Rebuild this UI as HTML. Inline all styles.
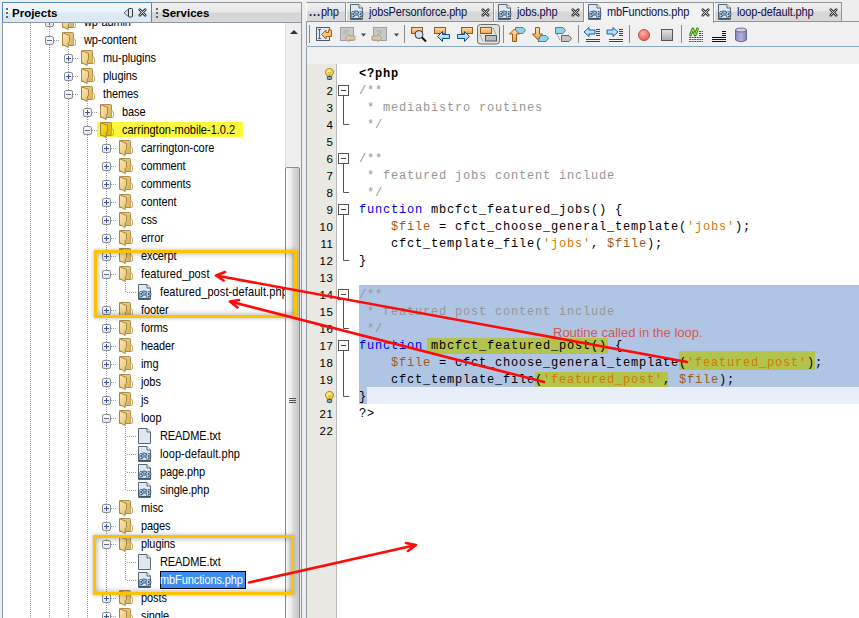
<!DOCTYPE html>
<html><head><meta charset="utf-8">
<style>
html,body{margin:0;padding:0}
body{width:859px;height:618px;overflow:hidden;background:#eeeeee;position:relative;font-family:"Liberation Sans",sans-serif}
.a{position:absolute}
#ptab{left:2px;top:2px;width:148px;height:20px;border:1px solid #4f88c6;border-bottom:none;background:linear-gradient(#f4f9fd 0,#eaf3fa 45%,#dbe9f5 50%,#dde9f5 100%)}
#stab{left:152px;top:2px;width:149px;height:20px;border-top:1px solid #8e949a;border-right:1px solid #8e949a;background:linear-gradient(#f0f0f0 0,#e8e8e8 45%,#d5d5d5 50%,#d8d8d8 100%)}
.htxt{font-size:11.5px;font-weight:bold;color:#000;top:6px;line-height:14px}
.grip{width:2px;height:2px;background:#666}
#hline{left:2px;top:22px;width:300px;height:1px;background:#8e98a3}
#tree{left:2px;top:23px;width:283px;height:595px;border-left:1px solid #8e98a3;background:#fff;overflow:hidden}
#tin{position:absolute;left:-3px;top:-23px;width:286px;height:618px}
#vsb{left:285px;top:23px;width:17px;height:595px;background:#efefef;border-left:1px solid #e2e2e2;border-right:1px solid #8e98a3;box-sizing:border-box}
.tl{position:absolute;font-size:11px;letter-spacing:-0.1px;color:#000;line-height:16px;height:16px;white-space:nowrap;transform:scaleY(1.12);transform-origin:0 75%}
.vd{position:absolute;width:1px;background:repeating-linear-gradient(#9a9a9a 0,#9a9a9a 1px,transparent 1px,transparent 2px)}
.hd{position:absolute;height:1px;background:repeating-linear-gradient(90deg,#9a9a9a 0,#9a9a9a 1px,transparent 1px,transparent 2px)}
.exp{position:absolute;width:7px;height:7px;border:1px solid #8f8f8f;border-radius:2px;background:linear-gradient(#fff,#e6e6e6)}
.exp i{position:absolute;left:1px;top:3px;width:5px;height:1px;background:#3b54a5}
.exp b{position:absolute;left:3px;top:1px;width:1px;height:5px;background:#3b54a5}
.exp.m i{background:#5b6fae}
.etab{position:absolute;top:2px;height:19px;border-top:1px solid #8e949a;border-left:1px solid #fff;border-right:1px solid #8e949a;background:linear-gradient(#efefef 0,#e7e7e7 45%,#d6d6d6 50%,#d9d9d9 100%);box-sizing:border-box;font-size:11px;color:#10104a}
.etab.act{background:#f2f2f2;height:21px}
.etab span{position:absolute;top:3px;line-height:13px;white-space:nowrap;letter-spacing:-0.15px;transform:scaleY(1.1);transform-origin:0 80%}
#tbar{left:306px;top:21px;width:553px;height:25px;border-top:1px solid #8e949a;border-left:1px solid #8e98a3;background:#f0f0f0;box-sizing:border-box}
#tbline{left:307px;top:46px;width:552px;height:1px;background:#8aa6c1}
#band{left:306px;top:47px;width:553px;height:17px;background:#f0f0f0;border-left:1px solid #8e98a3;box-sizing:border-box}
#gut{left:306px;top:64px;width:31px;height:554px;background:#e9e8e2;border-left:1px solid #8e98a3;border-right:1px solid #b9b9b4;box-sizing:border-box}
#code{left:337px;top:64px;width:522px;height:554px;background:#fff}
.ln{position:absolute;left:307px;width:26.6px;text-align:right;font-size:11.5px;letter-spacing:0.6px;color:#000;height:17px;line-height:17px}
.cl{position:absolute;left:359px;font-family:"Liberation Mono",monospace;font-size:12px;letter-spacing:0.8px;height:17px;line-height:17px;white-space:pre;color:#000}
.cm{color:#969696}
.kw{color:#0000e6}
.vr{color:#9b5b1a}
.st{color:#ce7b00}
.hl{background:#b3c34c}
.tsep{position:absolute;top:25px;width:1px;height:18px;background:#8a8a8a}
.ybox{position:absolute;border:3px solid #fcc400;box-shadow:inset 0 0 6px rgba(0,0,0,.38),0 0 4px rgba(0,0,0,.3)}
</style></head><body>
<svg width="0" height="0" style="position:absolute"><defs>
<linearGradient id="fb" x1="0" y1="0" x2="1" y2="1"><stop offset="0" stop-color="#efd48a"/><stop offset="1" stop-color="#d6b262"/></linearGradient>
<linearGradient id="ff" x1="0" y1="0" x2="0.6" y2="1"><stop offset="0" stop-color="#fae8b0"/><stop offset="1" stop-color="#e9ca7c"/></linearGradient>
<linearGradient id="fby" x1="0" y1="0" x2="1" y2="1"><stop offset="0" stop-color="#ecd21e"/><stop offset="1" stop-color="#d8b60a"/></linearGradient>
<linearGradient id="ffy" x1="0" y1="0" x2="0.6" y2="1"><stop offset="0" stop-color="#f8e62a"/><stop offset="1" stop-color="#e2c410"/></linearGradient>
</defs></svg>
<div class="a" id="ptab"></div>
<div class="a" id="stab"></div>
<div class="a grip" style="left:6px;top:8px"></div><div class="a grip" style="left:6px;top:12px"></div><div class="a grip" style="left:6px;top:16px"></div>
<div class="a htxt" style="left:12px">Projects</div>
<svg class="a" style="left:123px;top:8px" width="11" height="10" viewBox="0 0 11 10"><path d="M5.5 1 L1 4.8 L5.5 8.6 Z" fill="#d8dde2" stroke="#666"/><rect x="5.5" y="0.5" width="4" height="8.5" rx="0.8" fill="#e4e8ec" stroke="#333"/></svg><svg class="a" style="left:138px;top:8px" width="9" height="9" viewBox="0 0 9 9"><path d="M1.8 1.8 L7.2 7.2 M7.2 1.8 L1.8 7.2" stroke="#3a3a3a" stroke-width="2.7" stroke-linecap="round"/><path d="M1.8 1.8 L7.2 7.2 M7.2 1.8 L1.8 7.2" stroke="#eef5fa" stroke-width="0.9" stroke-linecap="round"/></svg>
<div class="a grip" style="left:156px;top:8px"></div><div class="a grip" style="left:156px;top:12px"></div><div class="a grip" style="left:156px;top:16px"></div>
<div class="a htxt" style="left:162px">Services</div>
<div class="a" id="hline"></div>
<div class="a" id="tree"><div id="tin"><div class="vd" style="left:30px;top:23px;height:595px"></div>
<div class="vd" style="left:49px;top:23px;height:595px"></div>
<div class="vd" style="left:68px;top:49px;height:569px"></div>
<div class="vd" style="left:87px;top:103px;height:515px"></div>
<div class="vd" style="left:106px;top:139px;height:479px"></div>
<div class="vd" style="left:125px;top:283px;height:9px"></div>
<div class="vd" style="left:125px;top:427px;height:63px"></div>
<div class="vd" style="left:125px;top:553px;height:27px"></div>
<div class="a" style="left:97px;top:122px;width:146px;height:15px;background:#fbf83c"></div>
<div class="hd" style="left:54px;top:22px;width:6px"></div>
<div class="exp " style="left:45px;top:18px"><i></i><b></b></div>
<svg width="14" height="16" viewBox="0 0 14 16" style="position:absolute;left:62px;top:14px">
<path d="M0.5 1.5 Q0.5 0.5 1.5 0.5 H10.5 Q11.5 0.5 11.5 1.5 V13.5 H0.5 Z" fill="url(#fb)" stroke="#b08c48"/>
<path d="M11.5 6.2 Q13.6 7.2 13.6 9.5 V12 Q13.6 13.5 12 13.5 H11.5 Z" fill="#fff" stroke="#c4a25a"/>
<path d="M0.5 0.8 L7.5 3.4 V9.4 L6.2 11 V15.5 L0.5 12.6 Z" fill="url(#ff)" stroke="#a98540"/>
</svg>
<div class="tl" style="left:84px;top:14px;">wp-admin</div>
<div class="hd" style="left:54px;top:40px;width:6px"></div>
<div class="exp m" style="left:45px;top:36px"><i></i></div>
<svg width="14" height="16" viewBox="0 0 14 16" style="position:absolute;left:62px;top:32px">
<path d="M0.5 1.5 Q0.5 0.5 1.5 0.5 H10.5 Q11.5 0.5 11.5 1.5 V13.5 H0.5 Z" fill="url(#fb)" stroke="#b08c48"/>
<path d="M11.5 6.2 Q13.6 7.2 13.6 9.5 V12 Q13.6 13.5 12 13.5 H11.5 Z" fill="#fff" stroke="#c4a25a"/>
<path d="M0.5 0.8 L7.5 3.4 V9.4 L6.2 11 V15.5 L0.5 12.6 Z" fill="url(#ff)" stroke="#a98540"/>
</svg>
<div class="tl" style="left:84px;top:32px;">wp-content</div>
<div class="hd" style="left:73px;top:58px;width:6px"></div>
<div class="exp " style="left:64px;top:54px"><i></i><b></b></div>
<svg width="14" height="16" viewBox="0 0 14 16" style="position:absolute;left:81px;top:50px">
<path d="M0.5 1.5 Q0.5 0.5 1.5 0.5 H10.5 Q11.5 0.5 11.5 1.5 V13.5 H0.5 Z" fill="url(#fb)" stroke="#b08c48"/>
<path d="M11.5 6.2 Q13.6 7.2 13.6 9.5 V12 Q13.6 13.5 12 13.5 H11.5 Z" fill="#fff" stroke="#c4a25a"/>
<path d="M0.5 0.8 L7.5 3.4 V9.4 L6.2 11 V15.5 L0.5 12.6 Z" fill="url(#ff)" stroke="#a98540"/>
</svg>
<div class="tl" style="left:103px;top:50px;">mu-plugins</div>
<div class="hd" style="left:73px;top:76px;width:6px"></div>
<div class="exp " style="left:64px;top:72px"><i></i><b></b></div>
<svg width="14" height="16" viewBox="0 0 14 16" style="position:absolute;left:81px;top:68px">
<path d="M0.5 1.5 Q0.5 0.5 1.5 0.5 H10.5 Q11.5 0.5 11.5 1.5 V13.5 H0.5 Z" fill="url(#fb)" stroke="#b08c48"/>
<path d="M11.5 6.2 Q13.6 7.2 13.6 9.5 V12 Q13.6 13.5 12 13.5 H11.5 Z" fill="#fff" stroke="#c4a25a"/>
<path d="M0.5 0.8 L7.5 3.4 V9.4 L6.2 11 V15.5 L0.5 12.6 Z" fill="url(#ff)" stroke="#a98540"/>
</svg>
<div class="tl" style="left:103px;top:68px;">plugins</div>
<div class="hd" style="left:73px;top:94px;width:6px"></div>
<div class="exp m" style="left:64px;top:90px"><i></i></div>
<svg width="14" height="16" viewBox="0 0 14 16" style="position:absolute;left:81px;top:86px">
<path d="M0.5 1.5 Q0.5 0.5 1.5 0.5 H10.5 Q11.5 0.5 11.5 1.5 V13.5 H0.5 Z" fill="url(#fb)" stroke="#b08c48"/>
<path d="M11.5 6.2 Q13.6 7.2 13.6 9.5 V12 Q13.6 13.5 12 13.5 H11.5 Z" fill="#fff" stroke="#c4a25a"/>
<path d="M0.5 0.8 L7.5 3.4 V9.4 L6.2 11 V15.5 L0.5 12.6 Z" fill="url(#ff)" stroke="#a98540"/>
</svg>
<div class="tl" style="left:103px;top:86px;">themes</div>
<div class="hd" style="left:92px;top:112px;width:6px"></div>
<div class="exp " style="left:83px;top:108px"><i></i><b></b></div>
<svg width="14" height="16" viewBox="0 0 14 16" style="position:absolute;left:100px;top:104px">
<path d="M0.5 1.5 Q0.5 0.5 1.5 0.5 H10.5 Q11.5 0.5 11.5 1.5 V13.5 H0.5 Z" fill="url(#fb)" stroke="#b08c48"/>
<path d="M11.5 6.2 Q13.6 7.2 13.6 9.5 V12 Q13.6 13.5 12 13.5 H11.5 Z" fill="#fff" stroke="#c4a25a"/>
<path d="M0.5 0.8 L7.5 3.4 V9.4 L6.2 11 V15.5 L0.5 12.6 Z" fill="url(#ff)" stroke="#a98540"/>
</svg>
<div class="tl" style="left:122px;top:104px;">base</div>
<div class="hd" style="left:92px;top:130px;width:6px"></div>
<div class="exp m" style="left:83px;top:126px"><i></i></div>
<svg width="14" height="16" viewBox="0 0 14 16" style="position:absolute;left:100px;top:122px">
<path d="M0.5 1.5 Q0.5 0.5 1.5 0.5 H10.5 Q11.5 0.5 11.5 1.5 V13.5 H0.5 Z" fill="url(#fby)" stroke="#b08c48"/>
<path d="M11.5 6.2 Q13.6 7.2 13.6 9.5 V12 Q13.6 13.5 12 13.5 H11.5 Z" fill="#fbf83c" stroke="#c4a25a"/>
<path d="M0.5 0.8 L7.5 3.4 V9.4 L6.2 11 V15.5 L0.5 12.6 Z" fill="url(#ffy)" stroke="#a98540"/>
</svg>
<div class="tl" style="left:122px;top:122px;letter-spacing:0.0px;">carrington-mobile-1.0.2</div>
<div class="hd" style="left:111px;top:148px;width:6px"></div>
<div class="exp " style="left:102px;top:144px"><i></i><b></b></div>
<svg width="14" height="16" viewBox="0 0 14 16" style="position:absolute;left:119px;top:140px">
<path d="M0.5 1.5 Q0.5 0.5 1.5 0.5 H10.5 Q11.5 0.5 11.5 1.5 V13.5 H0.5 Z" fill="url(#fb)" stroke="#b08c48"/>
<path d="M11.5 6.2 Q13.6 7.2 13.6 9.5 V12 Q13.6 13.5 12 13.5 H11.5 Z" fill="#fff" stroke="#c4a25a"/>
<path d="M0.5 0.8 L7.5 3.4 V9.4 L6.2 11 V15.5 L0.5 12.6 Z" fill="url(#ff)" stroke="#a98540"/>
</svg>
<div class="tl" style="left:141px;top:140px;letter-spacing:-0.04px;">carrington-core</div>
<div class="hd" style="left:111px;top:166px;width:6px"></div>
<div class="exp " style="left:102px;top:162px"><i></i><b></b></div>
<svg width="14" height="16" viewBox="0 0 14 16" style="position:absolute;left:119px;top:158px">
<path d="M0.5 1.5 Q0.5 0.5 1.5 0.5 H10.5 Q11.5 0.5 11.5 1.5 V13.5 H0.5 Z" fill="url(#fb)" stroke="#b08c48"/>
<path d="M11.5 6.2 Q13.6 7.2 13.6 9.5 V12 Q13.6 13.5 12 13.5 H11.5 Z" fill="#fff" stroke="#c4a25a"/>
<path d="M0.5 0.8 L7.5 3.4 V9.4 L6.2 11 V15.5 L0.5 12.6 Z" fill="url(#ff)" stroke="#a98540"/>
</svg>
<div class="tl" style="left:141px;top:158px;">comment</div>
<div class="hd" style="left:111px;top:184px;width:6px"></div>
<div class="exp " style="left:102px;top:180px"><i></i><b></b></div>
<svg width="14" height="16" viewBox="0 0 14 16" style="position:absolute;left:119px;top:176px">
<path d="M0.5 1.5 Q0.5 0.5 1.5 0.5 H10.5 Q11.5 0.5 11.5 1.5 V13.5 H0.5 Z" fill="url(#fb)" stroke="#b08c48"/>
<path d="M11.5 6.2 Q13.6 7.2 13.6 9.5 V12 Q13.6 13.5 12 13.5 H11.5 Z" fill="#fff" stroke="#c4a25a"/>
<path d="M0.5 0.8 L7.5 3.4 V9.4 L6.2 11 V15.5 L0.5 12.6 Z" fill="url(#ff)" stroke="#a98540"/>
</svg>
<div class="tl" style="left:141px;top:176px;">comments</div>
<div class="hd" style="left:111px;top:202px;width:6px"></div>
<div class="exp " style="left:102px;top:198px"><i></i><b></b></div>
<svg width="14" height="16" viewBox="0 0 14 16" style="position:absolute;left:119px;top:194px">
<path d="M0.5 1.5 Q0.5 0.5 1.5 0.5 H10.5 Q11.5 0.5 11.5 1.5 V13.5 H0.5 Z" fill="url(#fb)" stroke="#b08c48"/>
<path d="M11.5 6.2 Q13.6 7.2 13.6 9.5 V12 Q13.6 13.5 12 13.5 H11.5 Z" fill="#fff" stroke="#c4a25a"/>
<path d="M0.5 0.8 L7.5 3.4 V9.4 L6.2 11 V15.5 L0.5 12.6 Z" fill="url(#ff)" stroke="#a98540"/>
</svg>
<div class="tl" style="left:141px;top:194px;">content</div>
<div class="hd" style="left:111px;top:220px;width:6px"></div>
<div class="exp " style="left:102px;top:216px"><i></i><b></b></div>
<svg width="14" height="16" viewBox="0 0 14 16" style="position:absolute;left:119px;top:212px">
<path d="M0.5 1.5 Q0.5 0.5 1.5 0.5 H10.5 Q11.5 0.5 11.5 1.5 V13.5 H0.5 Z" fill="url(#fb)" stroke="#b08c48"/>
<path d="M11.5 6.2 Q13.6 7.2 13.6 9.5 V12 Q13.6 13.5 12 13.5 H11.5 Z" fill="#fff" stroke="#c4a25a"/>
<path d="M0.5 0.8 L7.5 3.4 V9.4 L6.2 11 V15.5 L0.5 12.6 Z" fill="url(#ff)" stroke="#a98540"/>
</svg>
<div class="tl" style="left:141px;top:212px;">css</div>
<div class="hd" style="left:111px;top:238px;width:6px"></div>
<div class="exp " style="left:102px;top:234px"><i></i><b></b></div>
<svg width="14" height="16" viewBox="0 0 14 16" style="position:absolute;left:119px;top:230px">
<path d="M0.5 1.5 Q0.5 0.5 1.5 0.5 H10.5 Q11.5 0.5 11.5 1.5 V13.5 H0.5 Z" fill="url(#fb)" stroke="#b08c48"/>
<path d="M11.5 6.2 Q13.6 7.2 13.6 9.5 V12 Q13.6 13.5 12 13.5 H11.5 Z" fill="#fff" stroke="#c4a25a"/>
<path d="M0.5 0.8 L7.5 3.4 V9.4 L6.2 11 V15.5 L0.5 12.6 Z" fill="url(#ff)" stroke="#a98540"/>
</svg>
<div class="tl" style="left:141px;top:230px;">error</div>
<div class="hd" style="left:111px;top:256px;width:6px"></div>
<div class="exp " style="left:102px;top:252px"><i></i><b></b></div>
<svg width="14" height="16" viewBox="0 0 14 16" style="position:absolute;left:119px;top:248px">
<path d="M0.5 1.5 Q0.5 0.5 1.5 0.5 H10.5 Q11.5 0.5 11.5 1.5 V13.5 H0.5 Z" fill="url(#fb)" stroke="#b08c48"/>
<path d="M11.5 6.2 Q13.6 7.2 13.6 9.5 V12 Q13.6 13.5 12 13.5 H11.5 Z" fill="#fff" stroke="#c4a25a"/>
<path d="M0.5 0.8 L7.5 3.4 V9.4 L6.2 11 V15.5 L0.5 12.6 Z" fill="url(#ff)" stroke="#a98540"/>
</svg>
<div class="tl" style="left:141px;top:248px;">excerpt</div>
<div class="hd" style="left:111px;top:274px;width:6px"></div>
<div class="exp m" style="left:102px;top:270px"><i></i></div>
<svg width="14" height="16" viewBox="0 0 14 16" style="position:absolute;left:119px;top:266px">
<path d="M0.5 1.5 Q0.5 0.5 1.5 0.5 H10.5 Q11.5 0.5 11.5 1.5 V13.5 H0.5 Z" fill="url(#fb)" stroke="#b08c48"/>
<path d="M11.5 6.2 Q13.6 7.2 13.6 9.5 V12 Q13.6 13.5 12 13.5 H11.5 Z" fill="#fff" stroke="#c4a25a"/>
<path d="M0.5 0.8 L7.5 3.4 V9.4 L6.2 11 V15.5 L0.5 12.6 Z" fill="url(#ff)" stroke="#a98540"/>
</svg>
<div class="tl" style="left:141px;top:266px;letter-spacing:0.1px;">featured_post</div>
<div class="hd" style="left:127px;top:292px;width:10px"></div>
<svg width="14" height="16" viewBox="0 0 14 16" style="position:absolute;left:138px;top:284px"><path d="M0.5 0.5 H9 L12.5 4 V15.5 H0.5 Z" fill="#dfe8f1" stroke="#5b6975"/><path d="M9 0.5 V4 H12.5" fill="#eef3f8" stroke="#5b6975"/><path d="M2 13.5V8.2M2 8.5H3.3Q4.4 8.5 4.4 9.8V10.2Q4.4 11.6 3.3 11.6H2M6 6.5V11.8M6 9Q6.4 8.4 7.1 8.4Q8.1 8.4 8.1 9.4V11.8M9.6 13.5V8.2M9.6 8.5H10.9Q12 8.5 12 9.8V10.2Q12 11.6 10.9 11.6H9.6" fill="none" stroke="#2f4b6b" stroke-width="2.6"/><path d="M2 13.5V8.2M2 8.5H3.3Q4.4 8.5 4.4 9.8V10.2Q4.4 11.6 3.3 11.6H2M6 6.5V11.8M6 9Q6.4 8.4 7.1 8.4Q8.1 8.4 8.1 9.4V11.8M9.6 13.5V8.2M9.6 8.5H10.9Q12 8.5 12 9.8V10.2Q12 11.6 10.9 11.6H9.6" fill="none" stroke="#b9dcf8" stroke-width="1"/><path d="M1 14.5H12" stroke="#3d546e" stroke-width="1.2"/></svg>
<div class="tl" style="left:160px;top:284px;letter-spacing:0.1px;">featured_post-default.php</div>
<div class="hd" style="left:111px;top:310px;width:6px"></div>
<div class="exp " style="left:102px;top:306px"><i></i><b></b></div>
<svg width="14" height="16" viewBox="0 0 14 16" style="position:absolute;left:119px;top:302px">
<path d="M0.5 1.5 Q0.5 0.5 1.5 0.5 H10.5 Q11.5 0.5 11.5 1.5 V13.5 H0.5 Z" fill="url(#fb)" stroke="#b08c48"/>
<path d="M11.5 6.2 Q13.6 7.2 13.6 9.5 V12 Q13.6 13.5 12 13.5 H11.5 Z" fill="#fff" stroke="#c4a25a"/>
<path d="M0.5 0.8 L7.5 3.4 V9.4 L6.2 11 V15.5 L0.5 12.6 Z" fill="url(#ff)" stroke="#a98540"/>
</svg>
<div class="tl" style="left:141px;top:302px;">footer</div>
<div class="hd" style="left:111px;top:328px;width:6px"></div>
<div class="exp " style="left:102px;top:324px"><i></i><b></b></div>
<svg width="14" height="16" viewBox="0 0 14 16" style="position:absolute;left:119px;top:320px">
<path d="M0.5 1.5 Q0.5 0.5 1.5 0.5 H10.5 Q11.5 0.5 11.5 1.5 V13.5 H0.5 Z" fill="url(#fb)" stroke="#b08c48"/>
<path d="M11.5 6.2 Q13.6 7.2 13.6 9.5 V12 Q13.6 13.5 12 13.5 H11.5 Z" fill="#fff" stroke="#c4a25a"/>
<path d="M0.5 0.8 L7.5 3.4 V9.4 L6.2 11 V15.5 L0.5 12.6 Z" fill="url(#ff)" stroke="#a98540"/>
</svg>
<div class="tl" style="left:141px;top:320px;">forms</div>
<div class="hd" style="left:111px;top:346px;width:6px"></div>
<div class="exp " style="left:102px;top:342px"><i></i><b></b></div>
<svg width="14" height="16" viewBox="0 0 14 16" style="position:absolute;left:119px;top:338px">
<path d="M0.5 1.5 Q0.5 0.5 1.5 0.5 H10.5 Q11.5 0.5 11.5 1.5 V13.5 H0.5 Z" fill="url(#fb)" stroke="#b08c48"/>
<path d="M11.5 6.2 Q13.6 7.2 13.6 9.5 V12 Q13.6 13.5 12 13.5 H11.5 Z" fill="#fff" stroke="#c4a25a"/>
<path d="M0.5 0.8 L7.5 3.4 V9.4 L6.2 11 V15.5 L0.5 12.6 Z" fill="url(#ff)" stroke="#a98540"/>
</svg>
<div class="tl" style="left:141px;top:338px;">header</div>
<div class="hd" style="left:111px;top:364px;width:6px"></div>
<div class="exp " style="left:102px;top:360px"><i></i><b></b></div>
<svg width="14" height="16" viewBox="0 0 14 16" style="position:absolute;left:119px;top:356px">
<path d="M0.5 1.5 Q0.5 0.5 1.5 0.5 H10.5 Q11.5 0.5 11.5 1.5 V13.5 H0.5 Z" fill="url(#fb)" stroke="#b08c48"/>
<path d="M11.5 6.2 Q13.6 7.2 13.6 9.5 V12 Q13.6 13.5 12 13.5 H11.5 Z" fill="#fff" stroke="#c4a25a"/>
<path d="M0.5 0.8 L7.5 3.4 V9.4 L6.2 11 V15.5 L0.5 12.6 Z" fill="url(#ff)" stroke="#a98540"/>
</svg>
<div class="tl" style="left:141px;top:356px;">img</div>
<div class="hd" style="left:111px;top:382px;width:6px"></div>
<div class="exp " style="left:102px;top:378px"><i></i><b></b></div>
<svg width="14" height="16" viewBox="0 0 14 16" style="position:absolute;left:119px;top:374px">
<path d="M0.5 1.5 Q0.5 0.5 1.5 0.5 H10.5 Q11.5 0.5 11.5 1.5 V13.5 H0.5 Z" fill="url(#fb)" stroke="#b08c48"/>
<path d="M11.5 6.2 Q13.6 7.2 13.6 9.5 V12 Q13.6 13.5 12 13.5 H11.5 Z" fill="#fff" stroke="#c4a25a"/>
<path d="M0.5 0.8 L7.5 3.4 V9.4 L6.2 11 V15.5 L0.5 12.6 Z" fill="url(#ff)" stroke="#a98540"/>
</svg>
<div class="tl" style="left:141px;top:374px;">jobs</div>
<div class="hd" style="left:111px;top:400px;width:6px"></div>
<div class="exp " style="left:102px;top:396px"><i></i><b></b></div>
<svg width="14" height="16" viewBox="0 0 14 16" style="position:absolute;left:119px;top:392px">
<path d="M0.5 1.5 Q0.5 0.5 1.5 0.5 H10.5 Q11.5 0.5 11.5 1.5 V13.5 H0.5 Z" fill="url(#fb)" stroke="#b08c48"/>
<path d="M11.5 6.2 Q13.6 7.2 13.6 9.5 V12 Q13.6 13.5 12 13.5 H11.5 Z" fill="#fff" stroke="#c4a25a"/>
<path d="M0.5 0.8 L7.5 3.4 V9.4 L6.2 11 V15.5 L0.5 12.6 Z" fill="url(#ff)" stroke="#a98540"/>
</svg>
<div class="tl" style="left:141px;top:392px;">js</div>
<div class="hd" style="left:111px;top:418px;width:6px"></div>
<div class="exp m" style="left:102px;top:414px"><i></i></div>
<svg width="14" height="16" viewBox="0 0 14 16" style="position:absolute;left:119px;top:410px">
<path d="M0.5 1.5 Q0.5 0.5 1.5 0.5 H10.5 Q11.5 0.5 11.5 1.5 V13.5 H0.5 Z" fill="url(#fb)" stroke="#b08c48"/>
<path d="M11.5 6.2 Q13.6 7.2 13.6 9.5 V12 Q13.6 13.5 12 13.5 H11.5 Z" fill="#fff" stroke="#c4a25a"/>
<path d="M0.5 0.8 L7.5 3.4 V9.4 L6.2 11 V15.5 L0.5 12.6 Z" fill="url(#ff)" stroke="#a98540"/>
</svg>
<div class="tl" style="left:141px;top:410px;">loop</div>
<div class="hd" style="left:127px;top:436px;width:10px"></div>
<svg width="14" height="16" viewBox="0 0 14 16" style="position:absolute;left:138px;top:428px"><path d="M0.5 0.5 H9 L12.5 4 V15.5 H0.5 Z" fill="#dfe8f1" stroke="#5b6975"/><path d="M9 0.5 V4 H12.5" fill="#eef3f8" stroke="#5b6975"/></svg>
<div class="tl" style="left:160px;top:428px;">README.txt</div>
<div class="hd" style="left:127px;top:454px;width:10px"></div>
<svg width="14" height="16" viewBox="0 0 14 16" style="position:absolute;left:138px;top:446px"><path d="M0.5 0.5 H9 L12.5 4 V15.5 H0.5 Z" fill="#dfe8f1" stroke="#5b6975"/><path d="M9 0.5 V4 H12.5" fill="#eef3f8" stroke="#5b6975"/><path d="M2 13.5V8.2M2 8.5H3.3Q4.4 8.5 4.4 9.8V10.2Q4.4 11.6 3.3 11.6H2M6 6.5V11.8M6 9Q6.4 8.4 7.1 8.4Q8.1 8.4 8.1 9.4V11.8M9.6 13.5V8.2M9.6 8.5H10.9Q12 8.5 12 9.8V10.2Q12 11.6 10.9 11.6H9.6" fill="none" stroke="#2f4b6b" stroke-width="2.6"/><path d="M2 13.5V8.2M2 8.5H3.3Q4.4 8.5 4.4 9.8V10.2Q4.4 11.6 3.3 11.6H2M6 6.5V11.8M6 9Q6.4 8.4 7.1 8.4Q8.1 8.4 8.1 9.4V11.8M9.6 13.5V8.2M9.6 8.5H10.9Q12 8.5 12 9.8V10.2Q12 11.6 10.9 11.6H9.6" fill="none" stroke="#b9dcf8" stroke-width="1"/><path d="M1 14.5H12" stroke="#3d546e" stroke-width="1.2"/></svg>
<div class="tl" style="left:160px;top:446px;letter-spacing:0.07px;">loop-default.php</div>
<div class="hd" style="left:127px;top:472px;width:10px"></div>
<svg width="14" height="16" viewBox="0 0 14 16" style="position:absolute;left:138px;top:464px"><path d="M0.5 0.5 H9 L12.5 4 V15.5 H0.5 Z" fill="#dfe8f1" stroke="#5b6975"/><path d="M9 0.5 V4 H12.5" fill="#eef3f8" stroke="#5b6975"/><path d="M2 13.5V8.2M2 8.5H3.3Q4.4 8.5 4.4 9.8V10.2Q4.4 11.6 3.3 11.6H2M6 6.5V11.8M6 9Q6.4 8.4 7.1 8.4Q8.1 8.4 8.1 9.4V11.8M9.6 13.5V8.2M9.6 8.5H10.9Q12 8.5 12 9.8V10.2Q12 11.6 10.9 11.6H9.6" fill="none" stroke="#2f4b6b" stroke-width="2.6"/><path d="M2 13.5V8.2M2 8.5H3.3Q4.4 8.5 4.4 9.8V10.2Q4.4 11.6 3.3 11.6H2M6 6.5V11.8M6 9Q6.4 8.4 7.1 8.4Q8.1 8.4 8.1 9.4V11.8M9.6 13.5V8.2M9.6 8.5H10.9Q12 8.5 12 9.8V10.2Q12 11.6 10.9 11.6H9.6" fill="none" stroke="#b9dcf8" stroke-width="1"/><path d="M1 14.5H12" stroke="#3d546e" stroke-width="1.2"/></svg>
<div class="tl" style="left:160px;top:464px;">page.php</div>
<div class="hd" style="left:127px;top:490px;width:10px"></div>
<svg width="14" height="16" viewBox="0 0 14 16" style="position:absolute;left:138px;top:482px"><path d="M0.5 0.5 H9 L12.5 4 V15.5 H0.5 Z" fill="#dfe8f1" stroke="#5b6975"/><path d="M9 0.5 V4 H12.5" fill="#eef3f8" stroke="#5b6975"/><path d="M2 13.5V8.2M2 8.5H3.3Q4.4 8.5 4.4 9.8V10.2Q4.4 11.6 3.3 11.6H2M6 6.5V11.8M6 9Q6.4 8.4 7.1 8.4Q8.1 8.4 8.1 9.4V11.8M9.6 13.5V8.2M9.6 8.5H10.9Q12 8.5 12 9.8V10.2Q12 11.6 10.9 11.6H9.6" fill="none" stroke="#2f4b6b" stroke-width="2.6"/><path d="M2 13.5V8.2M2 8.5H3.3Q4.4 8.5 4.4 9.8V10.2Q4.4 11.6 3.3 11.6H2M6 6.5V11.8M6 9Q6.4 8.4 7.1 8.4Q8.1 8.4 8.1 9.4V11.8M9.6 13.5V8.2M9.6 8.5H10.9Q12 8.5 12 9.8V10.2Q12 11.6 10.9 11.6H9.6" fill="none" stroke="#b9dcf8" stroke-width="1"/><path d="M1 14.5H12" stroke="#3d546e" stroke-width="1.2"/></svg>
<div class="tl" style="left:160px;top:482px;">single.php</div>
<div class="hd" style="left:111px;top:508px;width:6px"></div>
<div class="exp " style="left:102px;top:504px"><i></i><b></b></div>
<svg width="14" height="16" viewBox="0 0 14 16" style="position:absolute;left:119px;top:500px">
<path d="M0.5 1.5 Q0.5 0.5 1.5 0.5 H10.5 Q11.5 0.5 11.5 1.5 V13.5 H0.5 Z" fill="url(#fb)" stroke="#b08c48"/>
<path d="M11.5 6.2 Q13.6 7.2 13.6 9.5 V12 Q13.6 13.5 12 13.5 H11.5 Z" fill="#fff" stroke="#c4a25a"/>
<path d="M0.5 0.8 L7.5 3.4 V9.4 L6.2 11 V15.5 L0.5 12.6 Z" fill="url(#ff)" stroke="#a98540"/>
</svg>
<div class="tl" style="left:141px;top:500px;">misc</div>
<div class="hd" style="left:111px;top:526px;width:6px"></div>
<div class="exp " style="left:102px;top:522px"><i></i><b></b></div>
<svg width="14" height="16" viewBox="0 0 14 16" style="position:absolute;left:119px;top:518px">
<path d="M0.5 1.5 Q0.5 0.5 1.5 0.5 H10.5 Q11.5 0.5 11.5 1.5 V13.5 H0.5 Z" fill="url(#fb)" stroke="#b08c48"/>
<path d="M11.5 6.2 Q13.6 7.2 13.6 9.5 V12 Q13.6 13.5 12 13.5 H11.5 Z" fill="#fff" stroke="#c4a25a"/>
<path d="M0.5 0.8 L7.5 3.4 V9.4 L6.2 11 V15.5 L0.5 12.6 Z" fill="url(#ff)" stroke="#a98540"/>
</svg>
<div class="tl" style="left:141px;top:518px;">pages</div>
<div class="hd" style="left:111px;top:544px;width:6px"></div>
<div class="exp m" style="left:102px;top:540px"><i></i></div>
<svg width="14" height="16" viewBox="0 0 14 16" style="position:absolute;left:119px;top:536px">
<path d="M0.5 1.5 Q0.5 0.5 1.5 0.5 H10.5 Q11.5 0.5 11.5 1.5 V13.5 H0.5 Z" fill="url(#fb)" stroke="#b08c48"/>
<path d="M11.5 6.2 Q13.6 7.2 13.6 9.5 V12 Q13.6 13.5 12 13.5 H11.5 Z" fill="#fff" stroke="#c4a25a"/>
<path d="M0.5 0.8 L7.5 3.4 V9.4 L6.2 11 V15.5 L0.5 12.6 Z" fill="url(#ff)" stroke="#a98540"/>
</svg>
<div class="tl" style="left:141px;top:536px;">plugins</div>
<div class="hd" style="left:127px;top:562px;width:10px"></div>
<svg width="14" height="16" viewBox="0 0 14 16" style="position:absolute;left:138px;top:554px"><path d="M0.5 0.5 H9 L12.5 4 V15.5 H0.5 Z" fill="#dfe8f1" stroke="#5b6975"/><path d="M9 0.5 V4 H12.5" fill="#eef3f8" stroke="#5b6975"/></svg>
<div class="tl" style="left:160px;top:554px;">README.txt</div>
<div class="hd" style="left:127px;top:580px;width:10px"></div>
<svg width="14" height="16" viewBox="0 0 14 16" style="position:absolute;left:138px;top:572px"><path d="M0.5 0.5 H9 L12.5 4 V15.5 H0.5 Z" fill="#dfe8f1" stroke="#5b6975"/><path d="M9 0.5 V4 H12.5" fill="#eef3f8" stroke="#5b6975"/><path d="M2 13.5V8.2M2 8.5H3.3Q4.4 8.5 4.4 9.8V10.2Q4.4 11.6 3.3 11.6H2M6 6.5V11.8M6 9Q6.4 8.4 7.1 8.4Q8.1 8.4 8.1 9.4V11.8M9.6 13.5V8.2M9.6 8.5H10.9Q12 8.5 12 9.8V10.2Q12 11.6 10.9 11.6H9.6" fill="none" stroke="#2f4b6b" stroke-width="2.6"/><path d="M2 13.5V8.2M2 8.5H3.3Q4.4 8.5 4.4 9.8V10.2Q4.4 11.6 3.3 11.6H2M6 6.5V11.8M6 9Q6.4 8.4 7.1 8.4Q8.1 8.4 8.1 9.4V11.8M9.6 13.5V8.2M9.6 8.5H10.9Q12 8.5 12 9.8V10.2Q12 11.6 10.9 11.6H9.6" fill="none" stroke="#b9dcf8" stroke-width="1"/><path d="M1 14.5H12" stroke="#3d546e" stroke-width="1.2"/></svg>
<div class="a" style="left:160px;top:571px;width:84px;height:16px;background:#3d8ef0;border:1px solid #000"></div>
<div class="tl" style="left:160px;top:572px;color:#fff">mbFunctions.php</div>
<div class="hd" style="left:111px;top:598px;width:6px"></div>
<div class="exp " style="left:102px;top:594px"><i></i><b></b></div>
<svg width="14" height="16" viewBox="0 0 14 16" style="position:absolute;left:119px;top:590px">
<path d="M0.5 1.5 Q0.5 0.5 1.5 0.5 H10.5 Q11.5 0.5 11.5 1.5 V13.5 H0.5 Z" fill="url(#fb)" stroke="#b08c48"/>
<path d="M11.5 6.2 Q13.6 7.2 13.6 9.5 V12 Q13.6 13.5 12 13.5 H11.5 Z" fill="#fff" stroke="#c4a25a"/>
<path d="M0.5 0.8 L7.5 3.4 V9.4 L6.2 11 V15.5 L0.5 12.6 Z" fill="url(#ff)" stroke="#a98540"/>
</svg>
<div class="tl" style="left:141px;top:590px;">posts</div>
<div class="hd" style="left:111px;top:616px;width:6px"></div>
<div class="exp " style="left:102px;top:612px"><i></i><b></b></div>
<svg width="14" height="16" viewBox="0 0 14 16" style="position:absolute;left:119px;top:608px">
<path d="M0.5 1.5 Q0.5 0.5 1.5 0.5 H10.5 Q11.5 0.5 11.5 1.5 V13.5 H0.5 Z" fill="url(#fb)" stroke="#b08c48"/>
<path d="M11.5 6.2 Q13.6 7.2 13.6 9.5 V12 Q13.6 13.5 12 13.5 H11.5 Z" fill="#fff" stroke="#c4a25a"/>
<path d="M0.5 0.8 L7.5 3.4 V9.4 L6.2 11 V15.5 L0.5 12.6 Z" fill="url(#ff)" stroke="#a98540"/>
</svg>
<div class="tl" style="left:141px;top:608px;">single</div></div></div>
<div class="a" id="vsb"></div>
<svg class="a" style="left:290px;top:29px" width="8" height="6"><path d="M0 5 L4 1 L8 5Z" fill="#333"/></svg>
<div class="a" style="left:285px;top:167px;width:15px;height:460px;border:1px solid #8c8c8c;border-radius:2px;background:linear-gradient(90deg,#fbfbfb,#ececec 45%,#dedede 50%,#c6c6ca);box-sizing:border-box"></div>
<svg class="a" style="left:289px;top:397px" width="8" height="8"><path d="M0 1.5h7M0 3.5h7M0 5.5h7" stroke="#555"/></svg>
<div class="a" id="tbar"></div>
<div class="etab" style="left:306px;width:40px"><span style="left:2px;top:3px"><span style="position:static;letter-spacing:0.9px;font-weight:bold">...</span>php</span></div>
<div class="etab" style="left:346px;width:148px"><svg width="14" height="16" viewBox="0 0 14 16" style="position:absolute;left:3px;top:1px"><path d="M0.5 0.5 H9 L12.5 4 V15.5 H0.5 Z" fill="#dfe8f1" stroke="#5b6975"/><path d="M9 0.5 V4 H12.5" fill="#eef3f8" stroke="#5b6975"/><path d="M2 13.5V8.2M2 8.5H3.3Q4.4 8.5 4.4 9.8V10.2Q4.4 11.6 3.3 11.6H2M6 6.5V11.8M6 9Q6.4 8.4 7.1 8.4Q8.1 8.4 8.1 9.4V11.8M9.6 13.5V8.2M9.6 8.5H10.9Q12 8.5 12 9.8V10.2Q12 11.6 10.9 11.6H9.6" fill="none" stroke="#2f4b6b" stroke-width="2.6"/><path d="M2 13.5V8.2M2 8.5H3.3Q4.4 8.5 4.4 9.8V10.2Q4.4 11.6 3.3 11.6H2M6 6.5V11.8M6 9Q6.4 8.4 7.1 8.4Q8.1 8.4 8.1 9.4V11.8M9.6 13.5V8.2M9.6 8.5H10.9Q12 8.5 12 9.8V10.2Q12 11.6 10.9 11.6H9.6" fill="none" stroke="#b9dcf8" stroke-width="1"/><path d="M1 14.5H12" stroke="#3d546e" stroke-width="1.2"/></svg><span style="left:22px">jobsPersonforce.php</span><svg class="a" style="left:134px;top:5px" width="9" height="9" viewBox="0 0 9 9"><path d="M1.8 1.8 L7.2 7.2 M7.2 1.8 L1.8 7.2" stroke="#3a3a3a" stroke-width="2.7" stroke-linecap="round"/><path d="M1.8 1.8 L7.2 7.2 M7.2 1.8 L1.8 7.2" stroke="#dedede" stroke-width="0.9" stroke-linecap="round"/></svg></div>
<div class="etab" style="left:494px;width:90px"><svg width="14" height="16" viewBox="0 0 14 16" style="position:absolute;left:3px;top:1px"><path d="M0.5 0.5 H9 L12.5 4 V15.5 H0.5 Z" fill="#dfe8f1" stroke="#5b6975"/><path d="M9 0.5 V4 H12.5" fill="#eef3f8" stroke="#5b6975"/><path d="M2 13.5V8.2M2 8.5H3.3Q4.4 8.5 4.4 9.8V10.2Q4.4 11.6 3.3 11.6H2M6 6.5V11.8M6 9Q6.4 8.4 7.1 8.4Q8.1 8.4 8.1 9.4V11.8M9.6 13.5V8.2M9.6 8.5H10.9Q12 8.5 12 9.8V10.2Q12 11.6 10.9 11.6H9.6" fill="none" stroke="#2f4b6b" stroke-width="2.6"/><path d="M2 13.5V8.2M2 8.5H3.3Q4.4 8.5 4.4 9.8V10.2Q4.4 11.6 3.3 11.6H2M6 6.5V11.8M6 9Q6.4 8.4 7.1 8.4Q8.1 8.4 8.1 9.4V11.8M9.6 13.5V8.2M9.6 8.5H10.9Q12 8.5 12 9.8V10.2Q12 11.6 10.9 11.6H9.6" fill="none" stroke="#b9dcf8" stroke-width="1"/><path d="M1 14.5H12" stroke="#3d546e" stroke-width="1.2"/></svg><span style="left:22px">jobs.php</span><svg class="a" style="left:76px;top:5px" width="9" height="9" viewBox="0 0 9 9"><path d="M1.8 1.8 L7.2 7.2 M7.2 1.8 L1.8 7.2" stroke="#3a3a3a" stroke-width="2.7" stroke-linecap="round"/><path d="M1.8 1.8 L7.2 7.2 M7.2 1.8 L1.8 7.2" stroke="#dedede" stroke-width="0.9" stroke-linecap="round"/></svg></div>
<div class="etab act" style="left:584px;width:130px"><svg width="14" height="16" viewBox="0 0 14 16" style="position:absolute;left:3px;top:1px"><path d="M0.5 0.5 H9 L12.5 4 V15.5 H0.5 Z" fill="#dfe8f1" stroke="#5b6975"/><path d="M9 0.5 V4 H12.5" fill="#eef3f8" stroke="#5b6975"/><path d="M2 13.5V8.2M2 8.5H3.3Q4.4 8.5 4.4 9.8V10.2Q4.4 11.6 3.3 11.6H2M6 6.5V11.8M6 9Q6.4 8.4 7.1 8.4Q8.1 8.4 8.1 9.4V11.8M9.6 13.5V8.2M9.6 8.5H10.9Q12 8.5 12 9.8V10.2Q12 11.6 10.9 11.6H9.6" fill="none" stroke="#2f4b6b" stroke-width="2.6"/><path d="M2 13.5V8.2M2 8.5H3.3Q4.4 8.5 4.4 9.8V10.2Q4.4 11.6 3.3 11.6H2M6 6.5V11.8M6 9Q6.4 8.4 7.1 8.4Q8.1 8.4 8.1 9.4V11.8M9.6 13.5V8.2M9.6 8.5H10.9Q12 8.5 12 9.8V10.2Q12 11.6 10.9 11.6H9.6" fill="none" stroke="#b9dcf8" stroke-width="1"/><path d="M1 14.5H12" stroke="#3d546e" stroke-width="1.2"/></svg><span style="left:22px">mbFunctions.php</span><svg class="a" style="left:116px;top:5px" width="9" height="9" viewBox="0 0 9 9"><path d="M1.8 1.8 L7.2 7.2 M7.2 1.8 L1.8 7.2" stroke="#3a3a3a" stroke-width="2.7" stroke-linecap="round"/><path d="M1.8 1.8 L7.2 7.2 M7.2 1.8 L1.8 7.2" stroke="#f2f2f2" stroke-width="0.9" stroke-linecap="round"/></svg></div>
<div class="etab" style="left:714px;width:128px"><svg width="14" height="16" viewBox="0 0 14 16" style="position:absolute;left:3px;top:1px"><path d="M0.5 0.5 H9 L12.5 4 V15.5 H0.5 Z" fill="#dfe8f1" stroke="#5b6975"/><path d="M9 0.5 V4 H12.5" fill="#eef3f8" stroke="#5b6975"/><path d="M2 13.5V8.2M2 8.5H3.3Q4.4 8.5 4.4 9.8V10.2Q4.4 11.6 3.3 11.6H2M6 6.5V11.8M6 9Q6.4 8.4 7.1 8.4Q8.1 8.4 8.1 9.4V11.8M9.6 13.5V8.2M9.6 8.5H10.9Q12 8.5 12 9.8V10.2Q12 11.6 10.9 11.6H9.6" fill="none" stroke="#2f4b6b" stroke-width="2.6"/><path d="M2 13.5V8.2M2 8.5H3.3Q4.4 8.5 4.4 9.8V10.2Q4.4 11.6 3.3 11.6H2M6 6.5V11.8M6 9Q6.4 8.4 7.1 8.4Q8.1 8.4 8.1 9.4V11.8M9.6 13.5V8.2M9.6 8.5H10.9Q12 8.5 12 9.8V10.2Q12 11.6 10.9 11.6H9.6" fill="none" stroke="#b9dcf8" stroke-width="1"/><path d="M1 14.5H12" stroke="#3d546e" stroke-width="1.2"/></svg><span style="left:22px">loop-default.php</span><svg class="a" style="left:114px;top:5px" width="9" height="9" viewBox="0 0 9 9"><path d="M1.8 1.8 L7.2 7.2 M7.2 1.8 L1.8 7.2" stroke="#3a3a3a" stroke-width="2.7" stroke-linecap="round"/><path d="M1.8 1.8 L7.2 7.2 M7.2 1.8 L1.8 7.2" stroke="#dedede" stroke-width="0.9" stroke-linecap="round"/></svg></div>
<div class="tsep" style="left:309px"></div>
<div class="tsep" style="left:404px"></div>
<div class="tsep" style="left:503px"></div>
<div class="tsep" style="left:578px"></div>
<div class="tsep" style="left:629px"></div>
<div class="tsep" style="left:681px"></div>
<svg class="a" style="left:306px;top:21px" width="553" height="25" viewBox="306 21 553 25"><rect x="316.5" y="27.5" width="13" height="13" fill="#dde9f6" stroke="#4c5c70"/><path d="M318 29.5h3M319.5 29.5v9M318 38.5h3" stroke="#4a5058" fill="none" stroke-width="0.9"/><path d="M321.5 34.5 L326 30 V32.5 H328.5 V30 H331.5 V36.5 H326 V39 Z" fill="#f6c27a" stroke="#a8600e" stroke-linejoin="round"/><rect x="340.5" y="27.5" width="13" height="13" fill="#c8c8c8" stroke="#a0a0a0"/><path d="M343 31h6M343 33h4" stroke="#aaa"/><path d="M345 38 L349 34 V36 H355 V40 H349 V42 Z" fill="#d8c8b0" stroke="#b0a080"/><path d="M361 33.5h5l-2.5 3z" fill="#34475a"/><rect x="373.5" y="27.5" width="13" height="13" fill="#c8c8c8" stroke="#a0a0a0"/><path d="M376 31h6M378 33h4" stroke="#aaa"/><path d="M382 38 L378 34 V36 H372 V40 H378 V42 Z" fill="#d8c8b0" stroke="#b0a080"/><path d="M394 33.5h5l-2.5 3z" fill="#34475a"/><rect x="411.5" y="27.5" width="11" height="6" fill="url(#or)" stroke="#9a5810"/><circle cx="419" cy="34.5" r="4" fill="#cfe0f0" stroke="#334"/><path d="M422 37.5 L426 41.5" stroke="#111" stroke-width="2"/><rect x="434.5" y="27.5" width="11" height="6" fill="url(#or)" stroke="#9a5810"/><path d="M437.5 36.5 L442.5 31.5 V34.5 H449.5 V38.5 H442.5 V41.5 Z" fill="url(#bl)" stroke="#0d4c9c"/><rect x="461.5" y="27.5" width="11" height="6" fill="url(#or)" stroke="#9a5810"/><path d="M469.5 36.5 L464.5 31.5 V34.5 H457.5 V38.5 H464.5 V41.5 Z" fill="url(#bl)" stroke="#0d4c9c"/><rect x="477.5" y="24.5" width="22" height="19.5" rx="3" fill="#e2e2e2" stroke="#6c6c6c"/><rect x="480.5" y="27.5" width="11" height="6" fill="url(#or)" stroke="#9a5810"/><rect x="485.5" y="35.5" width="11" height="5.5" fill="#bcbcbc" stroke="#555"/><path d="M493 28 L496 34 M480 35 L483 41" stroke="#666" stroke-dasharray="1 1"/><path d="M515.5 27.5 H523 L525.5 30 L523 33.5 H515.5 Z" fill="#8fd6ea" stroke="#3b8aa0"/><path d="M514.5 29 L509.5 34 H512.5 V41.5 H516.5 V34 H519.5 Z" fill="url(#or)" stroke="#9a5810"/><path d="M535.5 27.5 V34 H532.5 L537.5 39.5 L542.5 34 H539.5 V27.5 Z" fill="url(#or)" stroke="#9a5810"/><path d="M540.5 35.5 H546 L548.5 38 L546 41.5 H538 Z" fill="#8fd6ea" stroke="#3b8aa0"/><path d="M555.5 27.5 H563 L565.5 30.5 L563 33.5 H555.5 Z" fill="#8fd6ea" stroke="#3b8aa0"/><path d="M561.5 35.5 H569 L571.5 38.5 L569 41.5 H561.5 Z" fill="#c4c4c4" stroke="#666"/><path d="M557 34 L560 40" stroke="#555" stroke-dasharray="1 1"/><path d="M584 32 L589 27.5 V30 H595 V34 H589 V36.5 Z" fill="#b8dcf7" stroke="#1b5fa8"/><path d="M596 29.5h4M596 31.5h4M596 33.5h4M596 35.5h4M586 39.5h14M586 41.5h14" stroke="#444"/><path d="M618 32 L613 27.5 V30 H607 V34 H613 V36.5 Z" fill="#b8dcf7" stroke="#1b5fa8"/><path d="M619 29.5h4M619 31.5h4M619 33.5h4M619 35.5h4M609 39.5h14M609 41.5h14" stroke="#444"/><defs><linearGradient id="bl" x1="0" y1="0" x2="0" y2="1"><stop offset="0" stop-color="#e2f1fd"/><stop offset="1" stop-color="#93c6f0"/></linearGradient><linearGradient id="or" x1="0" y1="0" x2="0" y2="1"><stop offset="0" stop-color="#fde0b0"/><stop offset="1" stop-color="#eda04a"/></linearGradient><radialGradient id="rg" cx="0.4" cy="0.35" r="0.7"><stop offset="0" stop-color="#ffb0a8"/><stop offset="1" stop-color="#ee5a50"/></radialGradient><linearGradient id="sg" x1="0" y1="0" x2="0" y2="1"><stop offset="0" stop-color="#e4e4e4"/><stop offset="1" stop-color="#a8a8a8"/></linearGradient><linearGradient id="cg" x1="0" y1="0" x2="1" y2="0"><stop offset="0" stop-color="#8686b8"/><stop offset="0.5" stop-color="#b4b4dc"/><stop offset="1" stop-color="#8080b0"/></linearGradient></defs><circle cx="644" cy="35" r="5.5" fill="url(#rg)" stroke="#b8504a"/><rect x="661.5" y="29.5" width="11" height="11" fill="url(#sg)" stroke="#555"/><path d="M690.5 35 L692.8 29 L695.2 35 L697.5 29" fill="none" stroke="#2f8a10" stroke-width="2.8" stroke-linejoin="round" stroke-linecap="round"/><path d="M690.5 35 L692.8 29 L695.2 35 L697.5 29" fill="none" stroke="#a8e060" stroke-width="1" stroke-linejoin="round" stroke-linecap="round"/><path d="M699 31.5h4M699 33.5h4M699 35.5h4M689 37.5h14M689 39.5h14M689 41.5h14" stroke="#555" stroke-dasharray="2 0.6"/><path d="M722 31.5h4M722 33.5h4M722 35.5h4M712 37.5h14M712 39.5h14M712 41.5h14" stroke="#111"/><path d="M735.5 30 V40 Q741 43.5 746.5 40 V30 Z" fill="url(#cg)" stroke="#6a6a8a"/><ellipse cx="741" cy="30" rx="5.5" ry="2" fill="#d0d0ee" stroke="#6a6a8a"/></svg>
<div class="a" id="tbline"></div>
<div class="a" id="band"></div>
<div class="a" id="gut"></div>
<div class="a" id="code"></div>
<div class="a" style="left:359px;top:285px;width:500px;height:102px;background:#b0c4e3"></div>
<div class="a" style="left:367px;top:387px;width:492px;height:17px;background:#e8eef7"></div>
<div class="a" style="left:359px;top:387px;width:8px;height:17px;background:#b0c4e3"></div>
<div class="a hl" style="left:427px;top:338px;width:181px;height:16px"></div>
<div class="a hl" style="left:679px;top:351px;width:136px;height:19px"></div>
<div class="a hl" style="left:535px;top:372px;width:133px;height:15px"></div>
<div class="cl" style="top:66px"><b>&lt;?php</b></div>
<div class="ln" style="top:83px">2</div>
<div class="cl" style="top:83px"><span class="cm">/**</span></div>
<div class="ln" style="top:100px">3</div>
<div class="cl" style="top:100px"><span class="cm"> * mediabistro routines</span></div>
<div class="ln" style="top:117px">4</div>
<div class="cl" style="top:117px"><span class="cm"> */</span></div>
<div class="ln" style="top:134px">5</div>
<div class="cl" style="top:134px"></div>
<div class="ln" style="top:151px">6</div>
<div class="cl" style="top:151px"><span class="cm">/**</span></div>
<div class="ln" style="top:168px">7</div>
<div class="cl" style="top:168px"><span class="cm"> * featured jobs content include</span></div>
<div class="ln" style="top:185px">8</div>
<div class="cl" style="top:185px"><span class="cm"> */</span></div>
<div class="ln" style="top:202px">9</div>
<div class="cl" style="top:202px"><span class="kw">function</span> mbcfct_featured_jobs() {</div>
<div class="ln" style="top:219px">10</div>
<div class="cl" style="top:219px">    <span class="vr">$file</span> = cfct_choose_general_template(<span class="st">'jobs'</span>);</div>
<div class="ln" style="top:236px">11</div>
<div class="cl" style="top:236px">    cfct_template_file(<span class="st">'jobs'</span>, <span class="vr">$file</span>);</div>
<div class="ln" style="top:253px">12</div>
<div class="cl" style="top:253px">}</div>
<div class="ln" style="top:270px">13</div>
<div class="cl" style="top:270px"></div>
<div class="ln" style="top:287px">14</div>
<div class="cl" style="top:287px"><span class="cm">/**</span></div>
<div class="ln" style="top:304px">15</div>
<div class="cl" style="top:304px"><span class="cm"> * featured post content include</span></div>
<div class="ln" style="top:321px">16</div>
<div class="cl" style="top:321px"><span class="cm"> */</span></div>
<div class="ln" style="top:338px">17</div>
<div class="cl" style="top:338px"><span class="kw">function</span> mbcfct_featured_post() {</div>
<div class="ln" style="top:355px">18</div>
<div class="cl" style="top:355px">    <span class="vr">$file</span> = cfct_choose_general_template(<span class="st">'featured_post'</span>);</div>
<div class="ln" style="top:372px">19</div>
<div class="cl" style="top:372px">    cfct_template_file(<span class="st">'featured_post'</span>, <span class="vr">$file</span>);</div>
<div class="cl" style="top:389px">}</div>
<div class="ln" style="top:406px">21</div>
<div class="cl" style="top:406px">?&gt;</div>
<div class="ln" style="top:423px">22</div>
<div class="cl" style="top:423px"></div>
<svg width="9" height="12" viewBox="0 0 9 12" style="position:absolute;left:325px;top:68px">
<defs><radialGradient id="bg32568" cx="0.4" cy="0.35" r="0.7"><stop offset="0" stop-color="#fff6a0"/><stop offset="1" stop-color="#e6b820"/></radialGradient></defs>
<path d="M4.5 0.5 C2 0.5 0.5 2.2 0.5 4.2 C0.5 6 1.8 6.8 2.2 8.3 H6.8 C7.2 6.8 8.5 6 8.5 4.2 C8.5 2.2 7 0.5 4.5 0.5 Z" fill="url(#bg32568)" stroke="#a88510"/>
<path d="M3 4 L4.5 5.3 L6 4 M4.5 5.3 V8" fill="none" stroke="#c09a20" stroke-width="0.8"/>
<rect x="2.3" y="8.5" width="4.4" height="3" rx="1" fill="#8fa0b8" stroke="#34425a"/>
</svg>
<svg width="9" height="12" viewBox="0 0 9 12" style="position:absolute;left:325px;top:391px">
<defs><radialGradient id="bg325391" cx="0.4" cy="0.35" r="0.7"><stop offset="0" stop-color="#fff6a0"/><stop offset="1" stop-color="#e6b820"/></radialGradient></defs>
<path d="M4.5 0.5 C2 0.5 0.5 2.2 0.5 4.2 C0.5 6 1.8 6.8 2.2 8.3 H6.8 C7.2 6.8 8.5 6 8.5 4.2 C8.5 2.2 7 0.5 4.5 0.5 Z" fill="url(#bg325391)" stroke="#a88510"/>
<path d="M3 4 L4.5 5.3 L6 4 M4.5 5.3 V8" fill="none" stroke="#c09a20" stroke-width="0.8"/>
<rect x="2.3" y="8.5" width="4.4" height="3" rx="1" fill="#8fa0b8" stroke="#34425a"/>
</svg>
<svg class="a" style="left:337px;top:64px" width="20" height="360" viewBox="0 0 20 360"><rect x="1.5" y="21.5" width="10" height="10" fill="#fff" stroke="#555"/><path d="M4 26.5H9" stroke="#444" stroke-width="1"/><path d="M6.5 31.5V60.5H12" fill="none" stroke="#555"/><rect x="1.5" y="89.5" width="10" height="10" fill="#fff" stroke="#555"/><path d="M4 94.5H9" stroke="#444" stroke-width="1"/><path d="M6.5 99.5V128.5H12" fill="none" stroke="#555"/><rect x="1.5" y="140.5" width="10" height="10" fill="#fff" stroke="#555"/><path d="M4 145.5H9" stroke="#444" stroke-width="1"/><path d="M6.5 150.5V196.5H12" fill="none" stroke="#555"/><rect x="1.5" y="225.5" width="10" height="10" fill="#fff" stroke="#555"/><path d="M4 230.5H9" stroke="#444" stroke-width="1"/><path d="M6.5 235.5V264.5H12" fill="none" stroke="#555"/><rect x="1.5" y="276.5" width="10" height="10" fill="#fff" stroke="#555"/><path d="M4 281.5H9" stroke="#444" stroke-width="1"/><path d="M6.5 286.5V332.5H12" fill="none" stroke="#555"/></svg>
<div class="a" style="left:553px;top:325px;font-size:13px;color:#d05a50;line-height:15px;white-space:nowrap">Routine called in the loop.</div>
<div class="ybox" style="left:94px;top:250px;width:197px;height:62px"></div>
<div class="ybox" style="left:93px;top:535px;width:195px;height:54px"></div>
<svg class="a" style="left:0;top:0" width="859" height="618"><path d="M687 362 L216 275.5 M225 272 L216 275.5 L223.5 280.5" stroke="#ff0a0a" stroke-width="2.6" fill="none" stroke-linecap="round" stroke-linejoin="round"/><path d="M544 382 L230 301.5 M239 300 L230 301.5 L237.5 307.5" stroke="#ff0a0a" stroke-width="2.6" fill="none" stroke-linecap="round" stroke-linejoin="round"/><path d="M249 582.5 L416 545 M406 543 L416 545 L408 551" stroke="#ff0a0a" stroke-width="2.6" fill="none" stroke-linecap="round" stroke-linejoin="round"/></svg>
</body></html>
